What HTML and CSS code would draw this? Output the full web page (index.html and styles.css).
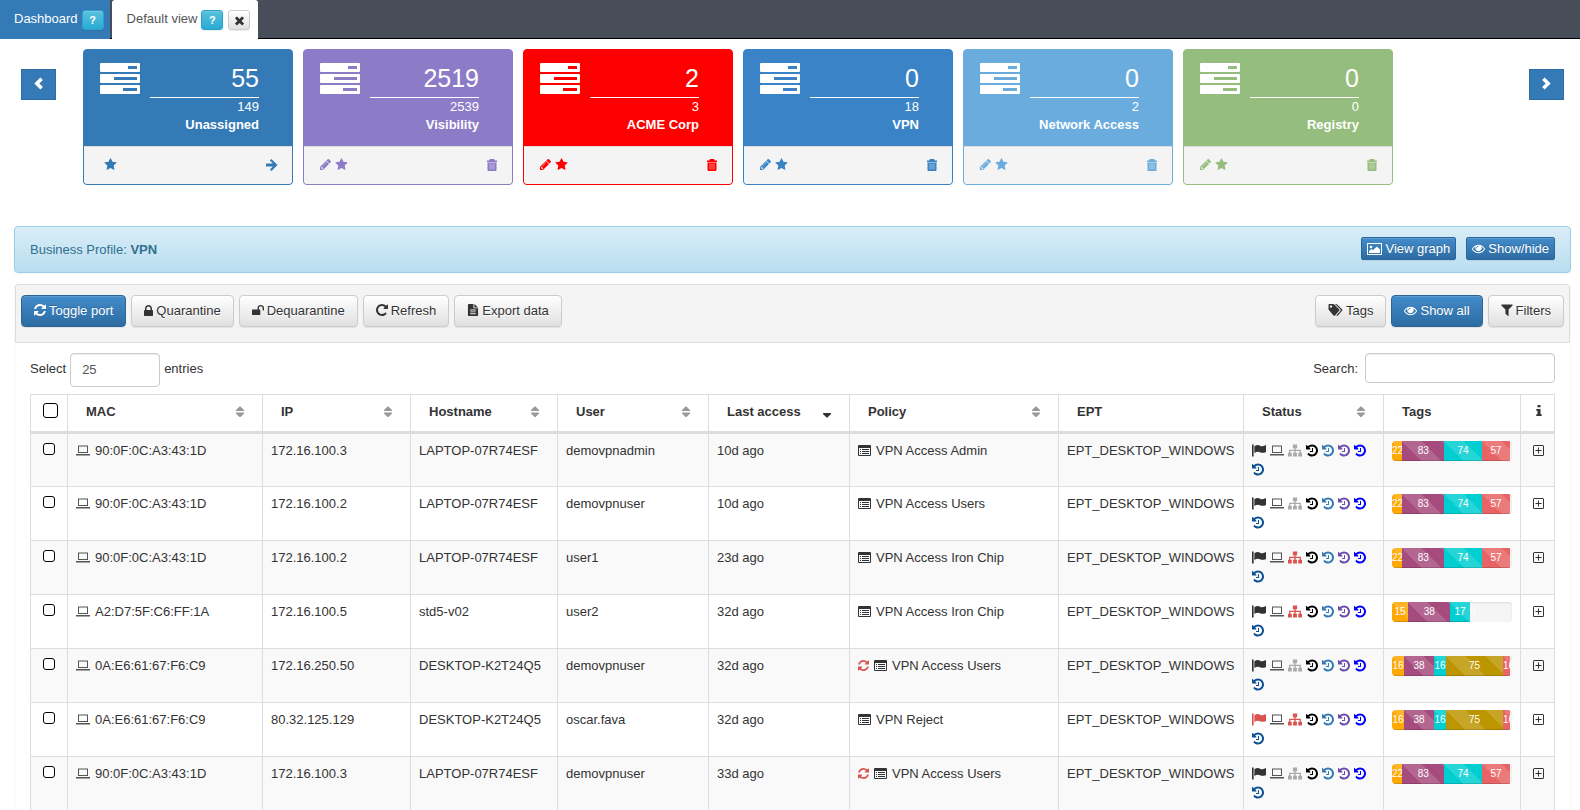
FILE: index.html
```html
<!DOCTYPE html>
<html lang="en">
<head>
    <meta charset="UTF-8">
    <meta name="viewport" content="width=device-width, initial-scale=1.0">
    <title>Default view</title>
    <link rel="stylesheet" href="styles.css">
</head>
<body>
    <svg class="sprite" aria-hidden="true">
        <symbol id="i-times" viewBox="0 0 1792 1792"><path d="M1490 1322q0 40-28 68l-136 136q-28 28-68 28t-68-28l-294-294-294 294q-28 28-68 28t-68-28l-136-136q-28-28-28-68t28-68l294-294-294-294q-28-28-28-68t28-68l136-136q28-28 68-28t68 28l294 294 294-294q28-28 68-28t68 28l136 136q28 28 28 68t-28 68l-294 294 294 294q28 28 28 68z"/></symbol>
        <symbol id="i-left" viewBox="0 0 14 14"><path d="M9 .5 2.500 7 9 13.500l2.700-2.700L7.900 7l3.800-3.800z"/></symbol>
        <symbol id="i-right" viewBox="0 0 14 14"><path d="M5 .5 11.500 7 5 13.500l-2.700-2.700L6.100 7 2.300 3.200z"/></symbol>
        <symbol id="i-tasks" viewBox="0 0 40 31"><path fill-rule="evenodd" d="M1 0h38q1 0 1 1v7q0 1-1 1H1q-1 0-1-1V1q0-1 1-1zM28 3v3h9V3zM1 11h38q1 0 1 1v7q0 1-1 1H1q-1 0-1-1v-7q0-1 1-1zM14 14v3h23v-3zM1 22h38q1 0 1 1v7q0 1-1 1H1q-1 0-1-1v-7q0-1 1-1zM23 25v3h14v-3z"/></symbol>
        <symbol id="i-star" viewBox="0 0 1792 1792"><path d="M1728 647q0 22-26 48l-363 354 86 500q1 7 1 20 0 21-10.500 35.500t-30.500 14.500q-19 0-40-12l-449-236-449 236q-22 12-40 12-21 0-31.500-14.500t-10.500-35.500q0-6 2-20l86-500-364-354q-25-27-25-48 0-37 56-46l502-73 225-455q19-41 49-41t49 41l225 455 502 73q56 9 56 46z"/></symbol>
        <symbol id="i-pencil" viewBox="0 0 1792 1792"><path d="M491 1536l91-91-235-235-91 91v107h128v128h107zm523-928q0-22-22-22-10 0-17 7l-542 542q-7 7-7 17 0 22 22 22 10 0 17-7l542-542q7-7 7-17zm-54-192l416 416-832 832h-416v-416zm683 96q0 53-37 90l-166 166-416-416 166-165q36-38 90-38 53 0 91 38l235 234q37 39 37 91z"/></symbol>
        <symbol id="i-trash" viewBox="0 0 12 12"><path fill-rule="evenodd" d="M4 0h4l1 1.500h2V3H1V1.500h2zM1.500 3.500h9V11q0 1-1 1h-7q-1 0-1-1z"/><path class="slots" d="M4 4.500v6M6 4.500v6M8 4.500v6"/></symbol>
        <symbol id="i-arrow" viewBox="0 0 12 12"><path d="M5.500 0 11.500 6l-6 6-1.600-1.600 2.900-3H0V4.600h6.800l-2.900-3z"/></symbol>
        <symbol id="i-picture" viewBox="0 0 15 12"><path fill-rule="evenodd" d="M0 0h15v12H0zM1 1v10h13V1z"/><circle cx="4" cy="4" r="1.300"/><path d="M2 10V8l2.500-2 1.500 1L10 3.500l3 3V10z"/></symbol>
        <symbol id="i-eye" viewBox="0 0 1792 1792"><path d="M1664 960q-152-236-381-353 61 104 61 225 0 185-131.500 316.500t-316.500 131.500-316.500-131.500-131.500-316.500q0-121 61-225-229 117-381 353 133 205 333.500 326.500t434.500 121.500 434.500-121.500 333.500-326.500zm-720-384q0-20-14-34t-34-14q-125 0-214.500 89.500t-89.500 214.500q0 20 14 34t34 14 34-14 14-34q0-86 61-147t147-61q20 0 34-14t14-34zm848 384q0 34-20 69-140 230-376.500 368.500t-499.500 138.500-499.500-139-376.500-368q-20-35-20-69t20-69q140-229 376.500-368t499.500-139 499.500 139 376.500 368q20 35 20 69z"/></symbol>
        <symbol id="i-refresh" viewBox="128 128 1536 1536"><path d="M1639 1056q0 5-1 7-64 268-268 434.500t-478 166.500q-146 0-282.500-55t-243.500-157l-129 129q-19 19-45 19t-45-19-19-45v-448q0-26 19-45t45-19h448q26 0 45 19t19 45-19 45l-137 137q71 66 161 102t187 36q134 0 250-65t186-179q11-17 53-117 8-23 30-23h192q13 0 22.500 9.500t9.500 22.500zm25-800v448q0 26-19 45t-45 19h-448q-26 0-45-19t-19-45 19-45l138-138q-148-137-349-137-134 0-250 65t-186 179q-11 17-53 117-8 23-30 23h-199q-13 0-22.500-9.500t-9.500-22.500v-7q65-268 270-434.500t480-166.500q146 0 284 55.500t245 156.500l130-129q19-19 45-19t45 19 19 45z"/></symbol>
        <symbol id="i-repeat" viewBox="128 128 1536 1536"><path d="M1664 256v448q0 26-19 45t-45 19h-448q-42 0-59-40-17-39 14-69l138-138q-148-137-349-137-104 0-198.500 40.500t-163.500 109.500-109.500 163.500-40.500 198.500 40.500 198.500 109.500 163.500 163.500 109.500 198.500 40.500q119 0 225-52t179-147q7-10 23-12 15 0 25 9l137 138q9 8 9.500 20.500t-7.500 22.500q-109 132-264 204.500t-327 72.500q-156 0-298-61t-245-164-164-245-61-298 61-298 164-245 245-164 298-61q147 0 284.500 55.500t244.500 156.500l130-129q29-31 70-14 39 17 39 59z"/></symbol>
        <symbol id="i-history" viewBox="128 128 1536 1536"><path d="M1664 896q0 156-61 298t-164 245-245 164-298 61q-172 0-327-72.500t-264-204.500q-7-10-6.500-22.500t8.500-20.500l137-138q10-9 25-9 16 2 23 12 73 95 179 147t225 52q104 0 198.500-40.500t163.500-109.500 109.500-163.500 40.500-198.500-40.500-198.500-109.500-163.500-163.500-109.500-198.500-40.500q-98 0-188 35.500t-160 101.500l137 138q31 30 14 69-17 40-59 40h-448q-26 0-45-19t-19-45v-448q0-42 40-59 39-17 69 14l130 129q107-101 244.500-156.500t284.500-55.500q156 0 298 61t245 164 164 245 61 298zm-640-288v448q0 14-9 23t-23 9h-320q-14 0-23-9t-9-23v-64q0-14 9-23t23-9h224v-352q0-14 9-23t23-9h64q14 0 23 9t9 23z"/></symbol>
        <symbol id="i-lock" viewBox="320 128 1152 1408"><path d="M640 768h512v-192q0-106-75-181t-181-75-181 75-75 181v192zm832 96v576q0 40-28 68t-68 28h-960q-40 0-68-28t-28-68v-576q0-40 28-68t68-28h32v-192q0-184 132-316t316-132 316 132 132 316v192h32q40 0 68 28t28 68z"/></symbol>
        <symbol id="i-unlock" viewBox="64 128 1664 1408"><path d="M1728 576v256q0 26-19 45t-45 19h-64q-26 0-45-19t-19-45v-256q0-106-75-181t-181-75-181 75-75 181v192h96q40 0 68 28t28 68v576q0 40-28 68t-68 28h-960q-40 0-68-28t-28-68v-576q0-40 28-68t68-28h672v-192q0-185 131.500-316.500t316.500-131.500 316.500 131.500 131.500 316.500z"/></symbol>
        <symbol id="i-file" viewBox="0 0 11 13"><path fill-rule="evenodd" d="M1 0h5v4.500h5V12q0 1-1 1H1q-1 0-1-1V1q0-1 1-1zM2.500 6v1h6V6zm0 2v1h6V8zm0 2v1h6v-1z"/><path d="M7 0l4 3.700H7z"/></symbol>
        <symbol id="i-tags" viewBox="0 0 14 12"><path fill-rule="evenodd" d="M0 1q0-1 1-1h3.500q.8 0 1.400.6l4.700 4.700q.8.700 0 1.500l-4 4.600q-.8.800-1.600 0L.6 6.300Q0 5.700 0 5zM2.500 1.300a1.200 1.200 0 1 0 .01 0z"/><path d="M6.500 0h.8q.8 0 1.400.6l4.800 4.700q.7.700 0 1.500l-4 4.600q-.9.800-1.700 0l4-4.500q.8-.8 0-1.600z"/></symbol>
        <symbol id="i-filter" viewBox="192 192 1408 1472"><path d="M1595 295q17 41-14 70l-493 493v742q0 42-39 59-13 5-25 5-27 0-45-19l-256-256q-19-19-19-45v-486l-493-493q-31-29-14-70 17-39 59-39h1280q42 0 59 39z"/></symbol>
        <symbol id="i-sort" viewBox="0 0 8 12"><path d="M3.500.5h1L8 4v1H0V4zM0 6.500h8v1L4.500 11h-1L0 7.500z"/></symbol>
        <symbol id="i-desc" viewBox="0 0 8 12"><path d="M0 7h8v1l-3.500 3.500h-1L0 8z"/></symbol>
        <symbol id="i-laptop" viewBox="0 0 14 10"><path fill-rule="evenodd" d="M2 0h10v7.500H2zM3 1v5.500h8V1zM0 8.500h14V10H0z"/></symbol>
        <symbol id="i-list" viewBox="0 0 13 11"><path fill-rule="evenodd" d="M1 0h11q1 0 1 1v9q0 1-1 1H1q-1 0-1-1V1q0-1 1-1zM1 3v7h11V3z"/><path d="M2 4h1v1H2zM4 4h7v1H4zM2 6h1v1H2zM4 6h7v1H4zM2 8h1v1H2zM4 8h7v1H4z"/></symbol>
        <symbol id="i-flag" viewBox="0 0 13 11"><path d="M0 0h1.500v11H0zM2.200 1.500Q5-.3 7.500 1T13 .5v6.300Q10 8.300 7.500 7.200T2.200 7.800z"/></symbol>
        <symbol id="i-sitemap" viewBox="0 0 13 11"><path d="M4.500 0h4v3.500H7.100v1.300H12V7.500h1V11H9.500V7.500h1.300V6H7.100v1.500h1.200V11H4.700V7.500h1.200V6H2.200v1.500h1.300V11H0V7.500h1V4.800h4.900V3.500H4.500z"/></symbol>
        <symbol id="i-plus" viewBox="0 0 11 11"><path fill-rule="evenodd" d="M1.500 0h8Q11 0 11 1.500v8Q11 11 9.500 11h-8Q0 11 0 9.500v-8Q0 0 1.500 0zM1 1v9h9V1z"/><path d="M5 2.500h1V5h2.500v1H6v2.500H5V6H2.500V5H5z"/></symbol>
        <symbol id="i-info" viewBox="0 0 6 11"><path d="M1.500 0h3v2.300h-3zM.3 4h4.200v5.200h1.200V11H.3V9.200h1.200V5.800H.3z"/></symbol>
    </svg>

    <nav class="tabs">
        <div class="tab tab-blue">
            <a href="#">Dashboard</a>
            <button class="btn btn-info btn-xs">?</button>
        </div>
        <div class="tab tab-active">
            <a href="#">Default view</a>
            <button class="btn btn-info btn-xs">?</button>
            <button class="btn btn-xs close" aria-label="Close"><svg class="icon"><use href="#i-times"/></svg></button>
        </div>
    </nav>

    <section class="carousel">
        <button class="arrow" aria-label="Previous"><svg class="icon"><use href="#i-left"/></svg></button>
        <div class="cards">
            <article class="card unassigned">
                <div class="card-head">
                    <svg class="tasks"><use href="#i-tasks"/></svg>
                    <div class="card-info"><div class="big">55</div><div class="total">149</div><b>Unassigned</b></div>
                </div>
                <div class="card-foot">
                    <a href="#" aria-label="Favourite"><svg class="icon"><use href="#i-star"/></svg></a>
                    <a href="#" class="last" aria-label="Open"><svg class="icon small"><use href="#i-arrow"/></svg></a>
                </div>
            </article>
            <article class="card visibility">
                <div class="card-head">
                    <svg class="tasks"><use href="#i-tasks"/></svg>
                    <div class="card-info"><div class="big">2519</div><div class="total">2539</div><b>Visibility</b></div>
                </div>
                <div class="card-foot">
                    <a href="#" aria-label="Edit"><svg class="icon"><use href="#i-pencil"/></svg></a>
                    <a href="#" aria-label="Favourite"><svg class="icon"><use href="#i-star"/></svg></a>
                    <a href="#" class="last" aria-label="Delete"><svg class="icon small"><use href="#i-trash"/></svg></a>
                </div>
            </article>
            <article class="card acme">
                <div class="card-head">
                    <svg class="tasks"><use href="#i-tasks"/></svg>
                    <div class="card-info"><div class="big">2</div><div class="total">3</div><b>ACME Corp</b></div>
                </div>
                <div class="card-foot">
                    <a href="#" aria-label="Edit"><svg class="icon"><use href="#i-pencil"/></svg></a>
                    <a href="#" aria-label="Favourite"><svg class="icon"><use href="#i-star"/></svg></a>
                    <a href="#" class="last" aria-label="Delete"><svg class="icon small"><use href="#i-trash"/></svg></a>
                </div>
            </article>
            <article class="card vpn">
                <div class="card-head">
                    <svg class="tasks"><use href="#i-tasks"/></svg>
                    <div class="card-info"><div class="big">0</div><div class="total">18</div><b>VPN</b></div>
                </div>
                <div class="card-foot">
                    <a href="#" aria-label="Edit"><svg class="icon"><use href="#i-pencil"/></svg></a>
                    <a href="#" aria-label="Favourite"><svg class="icon"><use href="#i-star"/></svg></a>
                    <a href="#" class="last" aria-label="Delete"><svg class="icon small"><use href="#i-trash"/></svg></a>
                </div>
            </article>
            <article class="card network">
                <div class="card-head">
                    <svg class="tasks"><use href="#i-tasks"/></svg>
                    <div class="card-info"><div class="big">0</div><div class="total">2</div><b>Network Access</b></div>
                </div>
                <div class="card-foot">
                    <a href="#" aria-label="Edit"><svg class="icon"><use href="#i-pencil"/></svg></a>
                    <a href="#" aria-label="Favourite"><svg class="icon"><use href="#i-star"/></svg></a>
                    <a href="#" class="last" aria-label="Delete"><svg class="icon small"><use href="#i-trash"/></svg></a>
                </div>
            </article>
            <article class="card registry">
                <div class="card-head">
                    <svg class="tasks"><use href="#i-tasks"/></svg>
                    <div class="card-info"><div class="big">0</div><div class="total">0</div><b>Registry</b></div>
                </div>
                <div class="card-foot">
                    <a href="#" aria-label="Edit"><svg class="icon"><use href="#i-pencil"/></svg></a>
                    <a href="#" aria-label="Favourite"><svg class="icon"><use href="#i-star"/></svg></a>
                    <a href="#" class="last" aria-label="Delete"><svg class="icon small"><use href="#i-trash"/></svg></a>
                </div>
            </article>
        </div>
        <button class="arrow" aria-label="Next"><svg class="icon"><use href="#i-right"/></svg></button>
    </section>

    <div class="profile">
        <span>Business Profile: <b>VPN</b></span>
        <div class="profile-buttons">
            <button class="btn btn-primary btn-sm"><svg class="icon wide"><use href="#i-picture"/></svg>View graph</button>
            <button class="btn btn-primary btn-sm"><svg class="icon"><use href="#i-eye"/></svg>Show/hide</button>
        </div>
    </div>

    <main class="panel">
        <div class="toolbar">
            <button class="btn btn-primary"><svg class="icon small"><use href="#i-refresh"/></svg>Toggle port</button>
            <button class="btn"><svg class="icon narrow"><use href="#i-lock"/></svg>Quarantine</button>
            <button class="btn"><svg class="icon small"><use href="#i-unlock"/></svg>Dequarantine</button>
            <button class="btn"><svg class="icon small"><use href="#i-repeat"/></svg>Refresh</button>
            <button class="btn"><svg class="icon small"><use href="#i-file"/></svg>Export data</button>
            <button class="btn push"><svg class="icon wide"><use href="#i-tags"/></svg>Tags</button>
            <button class="btn btn-primary"><svg class="icon"><use href="#i-eye"/></svg>Show all</button>
            <button class="btn"><svg class="icon small"><use href="#i-filter"/></svg>Filters</button>
        </div>

        <div class="controls">
            <label for="entries">Select</label>
            <select id="entries">
                <option>10</option>
                <option selected>25</option>
                <option>50</option>
            </select>
            <span>entries</span>
            <label for="search" class="push">Search:</label>
            <input type="text" id="search">
        </div>

        <table>
            <colgroup>
                <col class="c-check"><col class="c-mac"><col class="c-ip"><col class="c-host"><col class="c-user"><col class="c-last">
                <col class="c-policy"><col class="c-ept"><col class="c-status"><col class="c-tags"><col class="c-info">
            </colgroup>
            <thead>
                <tr>
                    <th class="check"><input type="checkbox" aria-label="Select all"></th>
                    <th><div>MAC<svg class="sort"><use href="#i-sort"/></svg></div></th>
                    <th><div>IP<svg class="sort"><use href="#i-sort"/></svg></div></th>
                    <th><div>Hostname<svg class="sort"><use href="#i-sort"/></svg></div></th>
                    <th><div>User<svg class="sort"><use href="#i-sort"/></svg></div></th>
                    <th><div>Last access<svg class="sort desc"><use href="#i-desc"/></svg></div></th>
                    <th><div>Policy<svg class="sort"><use href="#i-sort"/></svg></div></th>
                    <th><div>EPT</div></th>
                    <th><div>Status<svg class="sort"><use href="#i-sort"/></svg></div></th>
                    <th><div>Tags</div></th>
                    <th class="info"><svg class="info-icon"><use href="#i-info"/></svg></th>
                </tr>
            </thead>
            <tbody id="rows"></tbody>
        </table>
    </main>

    <script src="script.js"></script>
</body>
</html>
```
FILE: styles.css
```css
* {
    box-sizing: border-box;
}

body {
    margin: 0;
    font-family: Arial, "Liberation Sans", sans-serif;
    font-size: 13px;
    line-height: 19px;
    color: #333;
    background-color: #fff;
}

a {
    color: inherit;
    text-decoration: none;
}

.sprite {
    display: none;
}

.icon {
    width: 13px;
    height: 13px;
    fill: currentColor;
    flex: none;
}

.icon.small {
    width: 12px;
    height: 12px;
}

.icon.narrow {
    width: 9px;
    height: 11px;
}

.icon.wide {
    width: 15px;
    height: 12px;
}

.push {
    margin-left: auto;
}

/* buttons */
.btn {
    display: inline-flex;
    align-items: center;
    justify-content: center;
    gap: 3px;
    height: 32px;
    padding: 0 12px 2px;
    font: inherit;
    color: #333;
    white-space: nowrap;
    background: linear-gradient(#fff, #e0e0e0);
    border: 1px solid #ccc;
    border-radius: 4px;
    box-shadow: inset 0 1px 0 rgba(255, 255, 255, 0.15), 0 1px 1px rgba(0, 0, 0, 0.075);
    text-shadow: 0 1px 0 #fff;
    cursor: pointer;
}

.btn-primary {
    color: #fff;
    background: linear-gradient(#428bca, #2d6ca2);
    border-color: #2b669a;
    text-shadow: 0 -1px 0 rgba(0, 0, 0, 0.2);
}

.btn-info {
    color: #fff;
    font-weight: bold;
    background: linear-gradient(#5bc0de, #2aabd2);
    border-color: #28a4c9;
    text-shadow: none;
}

.btn-sm {
    height: 23px;
    padding: 0 5px;
    border-radius: 2px;
}

.btn-xs {
    width: 22px;
    height: 20px;
    padding: 0;
    font-size: 11px;
    border-radius: 3px;
}

/* tabs */
.tabs {
    display: flex;
    gap: 2px;
    height: 39px;
    background-color: #474e5a;
    border-bottom: 1px solid #000;
}

.tab {
    display: flex;
    gap: 4px;
    height: 39px;
    padding: 10px 6px 0 14px;
}

.tab a {
    line-height: 18px;
}

.tab-blue {
    color: #fff;
    background-color: #337ab7;
}

.tab-active {
    padding: 10px 8px 0 15px;
    color: #555;
    background-color: #fff;
    border-radius: 3px 3px 0 0;
}

.tab-active .close {
    margin-left: 1px;
}

/* profile cards */
.carousel {
    display: flex;
    align-items: flex-start;
    padding: 10px 16px 0 21px;
}

.arrow {
    display: flex;
    flex: none;
    align-items: center;
    justify-content: center;
    width: 35px;
    height: 31px;
    margin-top: 20px;
    padding: 0 0 3px;
    color: #fff;
    background-color: #337ab7;
    border: 1px solid #2e6da4;
    cursor: pointer;
}

.cards {
    display: flex;
    flex: 1;
    gap: 10px;
    min-width: 0;
    margin: 0 27px;
    overflow: hidden;
}

.card {
    flex: none;
    width: 210px;
    color: #337ab7;
    background-color: currentColor;
    border: 1px solid currentColor;
    border-radius: 4px;
    overflow: hidden;
}

.visibility {
    color: #8c7bc6;
}

.acme {
    color: #f00;
}

.vpn {
    color: #3983c6;
}

.network {
    color: #6aacde;
}

.registry {
    color: #95bd7e;
}

.card-head {
    display: flex;
    gap: 10px;
    height: 96px;
    padding: 13px 33px 0 16px;
}

.tasks {
    flex: none;
    width: 40px;
    height: 31px;
    fill: #fff;
}

.card-info {
    flex: 1;
    color: #fff;
    line-height: 18px;
    text-align: right;
    white-space: nowrap;
}

.big {
    height: 35px;
    font-size: 25px;
    line-height: 30px;
    border-bottom: 1px solid #fff;
}

.card-foot {
    display: flex;
    gap: 3px;
    align-items: center;
    height: 38px;
    padding: 0 14px 2px 15px;
    background-color: #f4f4f4;
    border-top: 1px solid #ddd;
}

.unassigned .card-foot {
    padding-left: 20px;
}

.card-foot a {
    display: flex;
}

.card-foot .last {
    margin-left: auto;
}

.slots {
    fill: none;
    stroke: #f4f4f4;
    stroke-opacity: 0.5;
}

/* profile bar */
.profile {
    display: flex;
    align-items: flex-start;
    justify-content: space-between;
    height: 47px;
    margin: 41px 9px 11px 14px;
    padding: 10px 15px;
    color: #31708f;
    background: linear-gradient(#d9edf7, #b9def0);
    border: 1px solid #9acfea;
    border-radius: 4px;
    box-shadow: 0 1px 2px rgba(0, 0, 0, 0.05);
}

.profile span {
    line-height: 26px;
}

.profile-buttons {
    display: flex;
    gap: 10px;
}

/* main panel */
.panel {
    margin: 0 9px 0 14px;
    border: 1px solid #f8f8f8;
    border-top: none;
}

.toolbar {
    display: flex;
    gap: 5px;
    height: 59px;
    padding: 10px 5px;
    background-color: #f4f4f4;
    border: 1px solid #ddd;
    border-radius: 3px 3px 0 0;
}

.controls {
    display: flex;
    gap: 4px;
    height: 51px;
    padding: 10px 15px 0;
    line-height: 32px;
}

.controls select,
.controls input {
    font: inherit;
    color: #555;
    background-color: #fff;
    border: 1px solid #ccc;
    border-radius: 4px;
    box-shadow: inset 0 1px 1px rgba(0, 0, 0, 0.075);
}

.controls select {
    width: 90px;
    height: 34px;
    padding: 0 11px;
    appearance: none;
}

.controls input {
    width: 190px;
    height: 30px;
    margin-left: 3px;
    padding: 0 8px;
}

/* table */
table {
    width: calc(100% - 30px);
    margin: 0 15px;
    table-layout: fixed;
    border-collapse: collapse;
}

.c-check {
    width: 37px;
}

.c-mac {
    width: 195px;
}

.c-ip {
    width: 148px;
}

.c-host {
    width: 147px;
}

.c-user {
    width: 151px;
}

.c-last {
    width: 141px;
}

.c-policy {
    width: 209px;
}

.c-ept {
    width: 185px;
}

.c-status {
    width: 140px;
}

.c-tags {
    width: 137px;
}

.c-info {
    width: 34px;
}

th,
td {
    border: 1px solid #ddd;
    text-align: left;
    vertical-align: top;
}

th {
    height: 38px;
    padding: 7px 18px;
    border-bottom-width: 3px;
}

th > div {
    display: flex;
    align-items: center;
    justify-content: space-between;
}

td {
    height: 54px;
    padding: 7px 8px;
    white-space: nowrap;
}

tbody tr:nth-child(odd) {
    background-color: #f9f9f9;
}

.sort {
    width: 8px;
    height: 12px;
    fill: #999;
}

.sort.desc {
    fill: #333;
}

th.check,
td.check {
    padding-left: 12px;
    padding-right: 0;
}

th.check {
    padding-top: 8px;
}

td.check {
    padding-top: 9px;
}

input[type="checkbox"] {
    display: block;
    width: 12px;
    height: 12px;
    margin: 0;
    appearance: none;
    background-color: #fff;
    border: 1px solid #000;
    border-radius: 3px;
}

th input[type="checkbox"] {
    width: 15px;
    height: 15px;
}

th.info,
td.info {
    padding-left: 2px;
    padding-right: 0;
    text-align: center;
}

.info-icon {
    width: 6px;
    height: 11px;
    fill: #333;
}

.line {
    display: flex;
    align-items: center;
    gap: 5px;
    height: 19px;
}

.status {
    display: flex;
    flex-wrap: wrap;
    column-gap: 4px;
}

.status .icon,
.line .icon,
.info .icon {
    height: 19px;
}

.status .icon {
    width: 12px;
}

.status .icon.flag,
.status .icon.laptop,
.status .icon.sitemap,
.line .icon.laptop {
    width: 14px;
}

.info .icon {
    width: 11px;
}

.line .icon.again {
    width: 11px;
}

.laptop {
    color: #555;
}

.gray {
    color: #aaa;
}

.red {
    color: #d9534f;
}

.black {
    color: #000;
}

.steel {
    color: #337ab7;
}

.purple {
    color: #6a4cac;
}

.blue {
    color: #00f;
}

.navy {
    color: #0b4f94;
}

/* tag bars */
.progress {
    display: flex;
    height: 20px;
    background-color: #f5f5f5;
    border-radius: 4px;
    box-shadow: inset 0 1px 2px rgba(0, 0, 0, 0.1);
    overflow: hidden;
}

.bar {
    flex: none;
    font-size: 10px;
    line-height: 20px;
    color: #fff;
    text-align: center;
    background-image: linear-gradient(45deg, rgba(255, 255, 255, 0.15) 25%, transparent 25%, transparent 50%, rgba(255, 255, 255, 0.15) 50%, rgba(255, 255, 255, 0.15) 75%, transparent 75%, transparent);
    background-size: 40px 40px;
    box-shadow: inset 0 -1px 0 rgba(0, 0, 0, 0.15);
}

.orange {
    background-color: #ffa800;
}

.plum {
    background-color: #a64b7d;
}

.cyan {
    background-color: #00ced1;
}

.gold {
    background-color: #bd9500;
}

.coral {
    background-color: #e86363;
}
```
FILE: script.js
```js
// tag bars: [color, value, width in %]
const fullTags = [["orange", 22, 8.5], ["plum", 83, 35], ["cyan", 74, 31.5], ["coral", 57, 23.5]];
const shortTags = [["orange", 15, 13.5], ["plum", 38, 35], ["cyan", 17, 16.5], ["coral", 0, 0]];
const mixedTags = [["orange", 16, 10], ["plum", 38, 25], ["cyan", 16, 10], ["gold", 75, 47.5], ["coral", 16, 6]];

const hosts = [
    { mac: "90:0F:0C:A3:43:1D", ip: "172.16.100.3", host: "LAPTOP-07R74ESF", user: "demovpnadmin", last: "10d ago", policy: "VPN Access Admin", net: "gray", tags: fullTags },
    { mac: "90:0F:0C:A3:43:1D", ip: "172.16.100.2", host: "LAPTOP-07R74ESF", user: "demovpnuser", last: "10d ago", policy: "VPN Access Users", net: "gray", tags: fullTags },
    { mac: "90:0F:0C:A3:43:1D", ip: "172.16.100.2", host: "LAPTOP-07R74ESF", user: "user1", last: "23d ago", policy: "VPN Access Iron Chip", net: "red", tags: fullTags },
    { mac: "A2:D7:5F:C6:FF:1A", ip: "172.16.100.5", host: "std5-v02", user: "user2", last: "32d ago", policy: "VPN Access Iron Chip", net: "red", tags: shortTags },
    { mac: "0A:E6:61:67:F6:C9", ip: "172.16.250.50", host: "DESKTOP-K2T24Q5", user: "demovpnuser", last: "32d ago", policy: "VPN Access Users", again: true, net: "gray", tags: mixedTags },
    { mac: "0A:E6:61:67:F6:C9", ip: "80.32.125.129", host: "DESKTOP-K2T24Q5", user: "oscar.fava", last: "32d ago", policy: "VPN Reject", flag: "red", net: "red", tags: mixedTags },
    { mac: "90:0F:0C:A3:43:1D", ip: "172.16.100.3", host: "LAPTOP-07R74ESF", user: "demovpnuser", last: "33d ago", policy: "VPN Access Users", again: true, net: "gray", tags: fullTags }
];

function icon(name, classes) {
    return `<svg class="icon ${classes || ""}"><use href="#i-${name}"/></svg>`;
}

document.getElementById("rows").innerHTML = hosts.map((h) => `
    <tr>
        <td class="check"><input type="checkbox" aria-label="Select ${h.mac}"></td>
        <td><div class="line">${icon("laptop", "laptop")}${h.mac}</div></td>
        <td>${h.ip}</td>
        <td>${h.host}</td>
        <td>${h.user}</td>
        <td>${h.last}</td>
        <td><div class="line">${h.again ? icon("refresh", "again red") : ""}${icon("list")}${h.policy}</div></td>
        <td>EPT_DESKTOP_WINDOWS</td>
        <td><div class="status">
            ${icon("flag", "flag " + (h.flag || ""))}${icon("laptop", "laptop")}${icon("sitemap", "sitemap " + h.net)}
            ${["black", "steel", "purple", "blue", "navy"].map((c) => icon("history", c)).join("")}
        </div></td>
        <td><div class="progress">
            ${h.tags.map(([color, value, width]) => `<div class="bar ${color}" style="width: ${width}%">${value}</div>`).join("")}
        </div></td>
        <td class="info">${icon("plus")}</td>
    </tr>`).join("");
```
